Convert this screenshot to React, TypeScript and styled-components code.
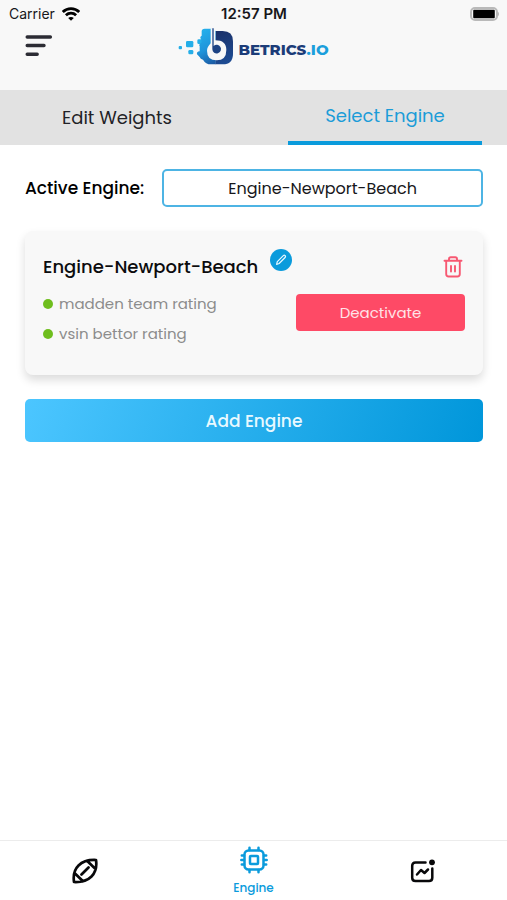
import React from "react";
import styled, { createGlobalStyle } from "styled-components";

const blue = "#0a9bdc";

const GlobalStyle = createGlobalStyle`
  *, *::before, *::after { box-sizing: border-box; }
  body {
    margin: 0;
    background: #fff;
    color: #17171b;
    font-family: Poppins, Inter, sans-serif;
  }
  button, select { font: inherit; color: inherit; }
  button { border: 0; padding: 0; background: none; cursor: pointer; }
  h1, h2, ul { margin: 0; padding: 0; }
  svg { display: block; }
`;

const Screen = styled.div`
  display: flex;
  flex-direction: column;
  min-height: 100vh;
`;

const Header = styled.header`
  height: 90px;
  background: #f8f8f8;
`;

const StatusBar = styled.div`
  display: grid;
  grid-template-columns: 1fr auto 1fr;
  align-items: center;
  height: 27px;
  padding: 0 8px 0 9px;
  font-family: Inter, sans-serif;
  font-size: 14px;
`;

const Carrier = styled.div`
  display: flex;
  align-items: center;
  gap: 7px;
`;

const Clock = styled.time`
  font-size: 15px;
  font-weight: 600;
`;

const Battery = styled.div`
  justify-self: end;
`;

const TitleBar = styled.div`
  display: grid;
  grid-template-columns: 1fr auto 1fr;
  align-items: start;
  padding: 0 25px;
`;

const MenuButton = styled.button`
  justify-self: start;
  padding-top: 7px;
`;

const Brand = styled.h1`
  display: flex;
  align-items: flex-start;
  gap: 4px;
  font-family: Montserrat, Poppins, Inter, sans-serif;
  font-size: 15px;
  font-weight: 800;
  line-height: 46px;
  color: #1c3c78;
`;

const BrandSuffix = styled.span`
  color: #1b9fdc;
`;

const Tabs = styled.nav`
  display: flex;
  justify-content: space-between;
  height: 55px;
  padding: 0 25px 0 20px;
  background: #e2e2e2;
`;

const Tab = styled.button<{ $active?: boolean }>`
  width: 42%;
  border-bottom: ${(p) => (p.$active ? `4px solid ${blue}` : "0")};
  font-size: 18px;
  color: ${(p) => (p.$active ? "#1b9cd8" : "#222226")};
`;

const Content = styled.main`
  display: flex;
  flex: 1;
  flex-direction: column;
  gap: 24px;
  padding: 24px 24px 24px 25px;
`;

const Field = styled.div`
  display: flex;
  align-items: center;
  gap: 18px;
`;

const FieldLabel = styled.label`
  font-size: 17px;
  font-weight: 500;
  color: #000;
`;

const EngineSelect = styled.select`
  flex: 1;
  min-width: 0;
  height: 38px;
  border: 2px solid #4db4e4;
  border-radius: 5px;
  background: #fff;
  appearance: none;
  font-size: 16px;
  text-align: center;
  text-align-last: center;
`;

const Card = styled.section`
  display: grid;
  grid-template-columns: 1fr auto;
  row-gap: 4px;
  padding: 18px 18px 26px;
  border-radius: 8px;
  background: #f8f8f8;
  box-shadow: 0 5px 10px rgba(0, 0, 0, 0.14);
`;

const CardTitle = styled.h2`
  display: flex;
  align-items: flex-start;
  gap: 12px;
  font-size: 18px;
  font-weight: 500;
  line-height: 36px;
  color: #0c0c0e;
`;

const EditButton = styled.button`
  display: grid;
  place-items: center;
  width: 22px;
  height: 22px;
  border-radius: 50%;
  background: ${blue};
`;

const DeleteButton = styled.button`
  justify-self: end;
  align-self: center;
  padding-right: 2px;
`;

const RatingList = styled.ul`
  list-style: none;
  font-size: 15px;
  line-height: 30px;
  color: #8c8c8c;
`;

const Rating = styled.li`
  display: flex;
  align-items: center;
  gap: 6px;

  &::before {
    content: "";
    width: 10px;
    height: 10px;
    border-radius: 50%;
    background: #6fbe1e;
  }
`;

const DeactivateButton = styled.button`
  width: 169px;
  height: 37px;
  margin-top: 5px;
  border-radius: 4px;
  background: #fe4a66;
  color: #ffe3e8;
  font-size: 15px;
`;

const AddButton = styled.button`
  height: 43px;
  border-radius: 5px;
  background: linear-gradient(110deg, #4cc6ff, #0096da);
  color: #e8f9ff;
  font-size: 17px;
  font-weight: 500;
`;

const BottomNav = styled.nav`
  display: grid;
  grid-template-columns: repeat(3, 1fr);
  height: 60px;
  border-top: 1px solid #ececec;
`;

const NavItem = styled.a`
  display: flex;
  flex-direction: column;
  align-items: center;
  justify-content: center;
  gap: 6px;
  color: #08080a;
  font-size: 12px;
  font-weight: 500;
  line-height: 16px;
  text-decoration: none;

  &[aria-current] { color: ${blue}; }
`;

const WifiIcon = () => (
  <svg width="18" height="14" viewBox="0 0 18 14" fill="none" stroke="#000" strokeWidth="2.8" aria-hidden="true">
    <path d="M.8 5C5.300.6 12.700.6 17.200 5M3.900 8.300c2.900-2.800 7.300-2.800 10.200 0" />
    <path d="M9 13.800 6.200 11c1.500-1.300 4.100-1.300 5.600 0Z" fill="#000" stroke="none" />
  </svg>
);

const BatteryIcon = () => (
  <svg width="30" height="14" viewBox="0 0 30 14" aria-hidden="true">
    <rect x="2" y="1" width="26" height="12" rx="4" fill="#f8f8f8" stroke="#b9b9b9" strokeWidth="2" />
    <rect x="4.200" y="2.800" width="21.600" height="8.400" rx="1" fill="#000" />
    <path d="M28.500 4.500c2 .8 2 4.200 0 5Z" fill="#b9b9b9" />
  </svg>
);

const MenuIcon = () => (
  <svg width="28" height="24" viewBox="0 0 28 24" stroke="#2c2c34" strokeWidth="3.400" strokeLinecap="round" aria-hidden="true">
    <path d="M2.200 3h23.200M2.200 11.500H19M2.200 20.200h10" />
  </svg>
);

const BrandMark = () => (
  <svg width="56" height="38" viewBox="0 0 168 114" aria-hidden="true">
    <defs>
      <linearGradient id="stem" x1="75" y1="5" x2="130" y2="112" gradientUnits="userSpaceOnUse">
        <stop offset="0" stopColor="#25b0ec" />
        <stop offset=".5" stopColor="#1f94da" />
        <stop offset="1" stopColor="#1b4c96" />
      </linearGradient>
      <linearGradient id="bowl" x1="110" y1="10" x2="140" y2="112" gradientUnits="userSpaceOnUse">
        <stop offset="0" stopColor="#1b3068" />
        <stop offset="1" stopColor="#1d4c94" />
      </linearGradient>
    </defs>
    <g fill="#25aee8">
      <rect x="2" y="57" width="10" height="10" rx="3" />
      <rect x="24" y="42" width="22" height="19" rx="4" />
      <rect x="31" y="69" width="15" height="13" rx="4" />
      <rect x="58" y="37" width="16" height="14" rx="4" />
    </g>
    <path d="M112 12h22q31 0 31 31v37q0 32-31 32h-22Z" fill="url(#bowl)" />
    <path
      d="M80 5h22q8 0 11 8v99h-14q-16 0-24-14-8-1-10-8l-8-8q-2-8 8-9V58q-4-4 1-8l5-4-2-10q-5-6 2-10V13q0-8 9-8Z"
      fill="url(#stem)"
    />
    <path
      d="M98 4h14v36q33 0 33 29 0 31-29 31-29 0-29-29 0-10 11-22Z"
      fill="#f8f8f8"
    />
    <path d="M103 4h4v53a13 13 0 1 1-4 10Z" fill="#1d4384" />
  </svg>
);

const PencilIcon = () => (
  <svg width="12" height="12" viewBox="0 0 12 12" fill="none" stroke="#e8f8ff" strokeWidth="1.200" strokeLinejoin="round" aria-hidden="true">
    <path d="m1.600 10.400.7-2.800 6-6q1-.8 1.800 0t0 1.900l-6 6Z" />
  </svg>
);

const TrashIcon = () => (
  <svg width="20" height="22" viewBox="0 0 20 22" fill="none" stroke="#f75872" strokeWidth="1.900" strokeLinecap="round" strokeLinejoin="round" aria-hidden="true">
    <path d="M1.500 4.800h17M6 4.500V3q0-1.800 1.800-1.800h4.400q1.800 0 1.800 1.800v1.500M3.200 5v13q0 2.500 2.500 2.500h8.600q2.500 0 2.500-2.500V5M8 10v5.600M12 10v5.600" />
  </svg>
);

const FootballIcon = () => (
  <svg width="26" height="26" viewBox="0 0 26 26" fill="none" stroke="currentColor" strokeWidth="2.700" strokeLinecap="round" strokeLinejoin="round" aria-hidden="true">
    <path d="M24 2q1.500 10.500-4.500 16.500T2 24Q.5 13.500 6.500 7.500T24 2ZM15 2.800 23.500 11M2.500 15l8.500 8.200M9.500 16.500l7-7" />
  </svg>
);

const ChipIcon = () => (
  <svg width="28" height="28" viewBox="0 0 28 28" fill="none" stroke="currentColor" strokeWidth="2.500" strokeLinecap="round" aria-hidden="true">
    <rect x="4.500" y="4.500" width="19" height="19" rx="4" />
    <rect x="10" y="10" width="8" height="8" rx=".8" />
    <path d="M9.500 4V1.800M18.500 4V1.800M9.500 24v2.200M18.500 24v2.200M4 9.500H1.800M4 14H1.300M4 18.500H1.800M24 9.500h2.200M24 14h2.700M24 18.500h2.200" />
  </svg>
);

const ChartIcon = () => (
  <svg width="26" height="24" viewBox="0 0 26 24" fill="none" stroke="currentColor" strokeWidth="2.500" strokeLinecap="round" strokeLinejoin="round" aria-hidden="true">
    <path d="M15.500 3.500h-10q-3.300 0-3.300 3.300v12q0 3.300 3.300 3.300h13.500q3.300 0 3.300-3.300V9.500M7 15.500l4-4.500 3.500 3L18 10.500" />
    <circle cx="22" cy="3.300" r="2.900" fill="currentColor" stroke="none" />
  </svg>
);

const ratings = ["madden team rating", "vsin bettor rating"];

export default function App() {
  return (
    <Screen>
      <GlobalStyle />
      <Header>
        <StatusBar>
          <Carrier>Carrier <WifiIcon /></Carrier>
          <Clock>12:57 PM</Clock>
          <Battery><BatteryIcon /></Battery>
        </StatusBar>
        <TitleBar>
          <MenuButton aria-label="Menu"><MenuIcon /></MenuButton>
          <Brand>
            <BrandMark />
            <span>BETRICS<BrandSuffix>.IO</BrandSuffix></span>
          </Brand>
        </TitleBar>
      </Header>
      <Tabs>
        <Tab>Edit Weights</Tab>
        <Tab $active aria-current="page">Select Engine</Tab>
      </Tabs>
      <Content>
        <Field>
          <FieldLabel htmlFor="engine">Active Engine:</FieldLabel>
          <EngineSelect id="engine">
            <option>Engine-Newport-Beach</option>
          </EngineSelect>
        </Field>
        <Card>
          <CardTitle>
            Engine-Newport-Beach
            <EditButton aria-label="Edit engine"><PencilIcon /></EditButton>
          </CardTitle>
          <DeleteButton aria-label="Delete engine"><TrashIcon /></DeleteButton>
          <RatingList>
            {ratings.map((name) => <Rating key={name}>{name}</Rating>)}
          </RatingList>
          <DeactivateButton>Deactivate</DeactivateButton>
        </Card>
        <AddButton>Add Engine</AddButton>
      </Content>
      <BottomNav>
        <NavItem href="#games" aria-label="Games"><FootballIcon /></NavItem>
        <NavItem href="#engine" aria-current="page"><ChipIcon />Engine</NavItem>
        <NavItem href="#stats" aria-label="Stats"><ChartIcon /></NavItem>
      </BottomNav>
    </Screen>
  );
}
